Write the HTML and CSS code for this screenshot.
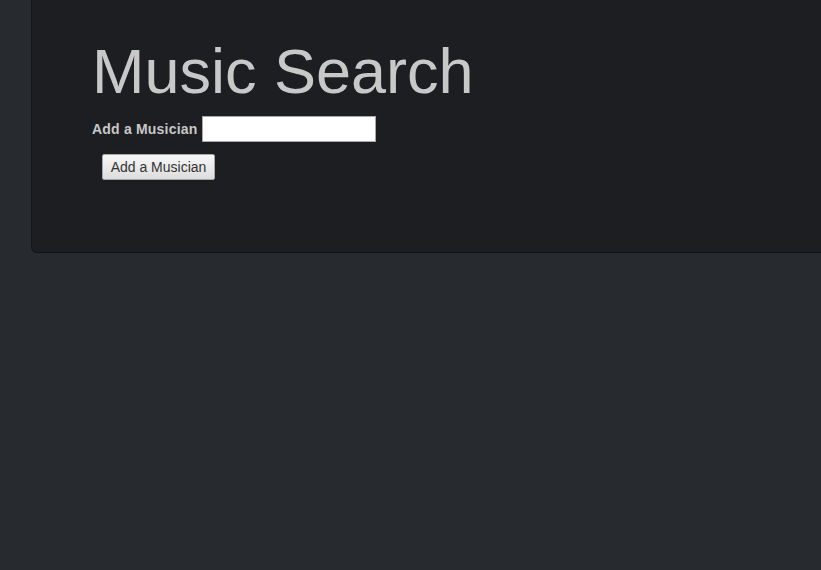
FILE: index.html
```html
<!DOCTYPE html>
<html>
<head>
<meta charset="utf-8">
<link rel="stylesheet" href="styles.css">
</head>
<body>
<div class="jumbotron">
  <h1 class="title">Music Search</h1>
  <form class="add-form">
    <div class="field">
      <label class="field-label" for="musician">Add a Musician</label>
      <input class="field-input" id="musician" type="text">
    </div>
    <button class="add-btn" type="button">Add a Musician</button>
  </form>
</div>
</body>
</html>
```

FILE: styles.css
```css
html, body {
  margin: 0;
  padding: 0;
}
body {
  background: #272b30;
  overflow: hidden;
  width: 821px;
  height: 570px;
  font-family: "Liberation Sans", Arial, sans-serif;
}
.jumbotron {
  margin-left: 31px;
  width: 830px;
  box-sizing: border-box;
  background: #1c1e22;
  border-left: 1px solid #141619;
  border-bottom: 1px solid #101214;
  border-bottom-left-radius: 6px;
  padding: 37px 0 72px 60px;
}
.title {
  margin: 0;
  font-size: 63px;
  line-height: 69px;
  font-weight: normal;
  color: #c8c8c8;
}
.add-form {
  margin: 10px 0 0 0;
  display: flex;
  flex-direction: column;
  align-items: flex-start;
}
.field {
  display: flex;
  align-items: center;
  gap: 5px;
}
.field-label {
  font-size: 14px;
  font-weight: bold;
  color: #c8c8c8;
  letter-spacing: 0.2px;
}
.field-input {
  width: 174px;
  height: 26px;
  box-sizing: border-box;
  border: 1px solid #a9a9a9;
  background: #fff;
  margin: 0;
  padding: 0 4px;
}
.add-btn {
  margin: 12px 0 0 10px;
  width: 113px;
  height: 26px;
  box-sizing: border-box;
  border: 1px solid #a6a6a6;
  border-radius: 2px;
  background: linear-gradient(#f7f7f7, #dddddd);
  color: #333;
  font-family: "Liberation Sans", Arial, sans-serif;
  font-size: 14px;
  padding: 0;
}
```
